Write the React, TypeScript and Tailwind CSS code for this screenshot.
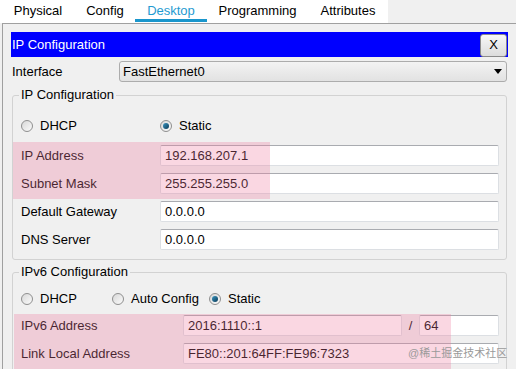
import React from 'react';

const tabs = [
  { name: 'Physical', w: 'w-[74px]' },
  { name: 'Config', w: 'w-[60px]' },
  { name: 'Desktop', w: 'w-[72px]', active: true },
  { name: 'Programming', w: 'w-[101px]' },
  { name: 'Attributes', w: 'w-[80px]' },
];

function Radio({ label, checked, className }: { label: string; checked?: boolean; className?: string }) {
  return (
    <div className={`flex items-center ${className ?? ''}`}>
      <span className="flex h-[12px] w-[12px] items-center justify-center rounded-full border border-[#8f8f8f] bg-gradient-to-br from-[#d8d8d8] to-[#fbfbfb]">
        {checked && <span className="h-[6px] w-[6px] rounded-full bg-gradient-to-br from-[#3b97c2] to-[#0b3b58]" />}
      </span>
      <span className="ml-[7px]">{label}</span>
    </div>
  );
}

function Field({ value, className }: { value: string; className?: string }) {
  return (
    <div
      className={`flex h-[21px] items-center rounded-[2px] border border-[#dcdfe3] border-t-[#a9abb0] bg-white pl-[4px] ${className ?? ''}`}
    >
      {value}
    </div>
  );
}

function Row({ label, value, labelW }: { label: string; value: string; labelW: string }) {
  return (
    <div className="flex h-[21px] items-center pl-[8px] pr-[7px]">
      <span className={labelW}>{label}</span>
      <Field value={value} className="flex-1" />
    </div>
  );
}

export default function App() {
  return (
    <div className="relative h-[369px] w-[516px] overflow-hidden bg-[#f0f0f0] font-['Liberation_Sans',Arial,sans-serif] text-[13px] text-black">
      <div className="flex h-[23px]">
        <div className="flex w-[388px] bg-white pl-[1px]">
          {tabs.map((t) => (
            <div key={t.name} className={`${t.w} relative flex h-[23px] justify-center pt-[3px] leading-[16px] ${t.active ? 'text-[#1f9bd1]' : ''}`}>
              {t.name}
              {t.active && <span className="absolute bottom-[1px] left-0 h-[3px] w-full bg-[#1a96cc]" />}
            </div>
          ))}
        </div>
      </div>

      <div className="ml-[2px] h-[346px] border-l border-t border-[#a0a0a0] pl-[8px] pr-[8px] pt-[8px]">
        <div className="flex h-[25px] items-center justify-between bg-[#0000ff] pl-[1px] pt-[1px] text-white">
          <span>IP Configuration</span>
          <button className="mr-[1px] flex h-[23px] w-[27px] items-center justify-center rounded-[3px] border border-[#8a8a8a] bg-gradient-to-b from-[#f7f7f7] to-[#dcdcdc] text-black">
            X
          </button>
        </div>

        <div className="mt-[4px] flex h-[21px] items-center">
          <span className="w-[108px] pl-[1px]">Interface</span>
          <div className="mr-[1px] flex h-[21px] flex-1 items-center justify-between rounded-[3px] border border-[#acacac] bg-gradient-to-b from-[#f3f3f3] to-[#e2e2e2] pl-[3px] pr-[4px]">
            <span>FastEthernet0</span>
            <svg width="8" height="5" viewBox="0 0 8 5">
              <path d="M0 0h8L4 5z" fill="#000" />
            </svg>
          </div>
        </div>

        <fieldset className="mx-[1px] mt-[5px] rounded-[3px] border border-[#d2d2d2] pb-[9px]">
          <legend className="ml-[6px] px-[2px] leading-[16px]">IP Configuration</legend>
          <div className="mt-[13px] flex h-[20px] items-center pl-[8px]">
            <Radio label="DHCP" className="w-[139px]" />
            <Radio label="Static" checked />
          </div>
          <div className="mt-[9px] flex flex-col gap-[7px]">
            <Row label="IP Address" value="192.168.207.1" labelW="w-[139px]" />
            <Row label="Subnet Mask" value="255.255.255.0" labelW="w-[139px]" />
            <Row label="Default Gateway" value="0.0.0.0" labelW="w-[139px]" />
            <Row label="DNS Server" value="0.0.0.0" labelW="w-[139px]" />
          </div>
        </fieldset>

        <fieldset className="mx-[1px] mt-[4px] rounded-[3px] border border-[#d2d2d2] pb-[9px]">
          <legend className="ml-[6px] px-[2px] leading-[16px]">IPv6 Configuration</legend>
          <div className="mt-[9px] flex h-[20px] items-center pl-[8px]">
            <Radio label="DHCP" className="w-[91px]" />
            <Radio label="Auto Config" className="w-[97px]" />
            <Radio label="Static" checked />
          </div>
          <div className="mt-[6px] flex flex-col gap-[7px]">
            <div className="flex h-[21px] items-center pl-[8px] pr-[7px]">
              <span className="w-[162px]">IPv6 Address</span>
              <Field value="2016:1110::1" className="w-[219px]" />
              <span className="w-[17px] text-center">/</span>
              <Field value="64" className="flex-1" />
            </div>
            <Row label="Link Local Address" value="FE80::201:64FF:FE96:7323" labelW="w-[162px]" />
          </div>
        </fieldset>
      </div>

      {/* annotation highlights */}
      <div className="pointer-events-none absolute left-[13px] top-[142px] h-[57px] w-[257px] bg-[#f07aa0]/30" />
      <div className="pointer-events-none absolute left-[14px] top-[314px] h-[55px] w-[437px] bg-[#f07aa0]/30" />

      <div className="pointer-events-none absolute left-[408px] top-[345px] font-['Liberation_Sans','Noto_Sans_CJK_SC',sans-serif] text-[11px] leading-[16px] text-[#9a9a9a]">
        @稀土掘金技术社区
      </div>
    </div>
  );
}
